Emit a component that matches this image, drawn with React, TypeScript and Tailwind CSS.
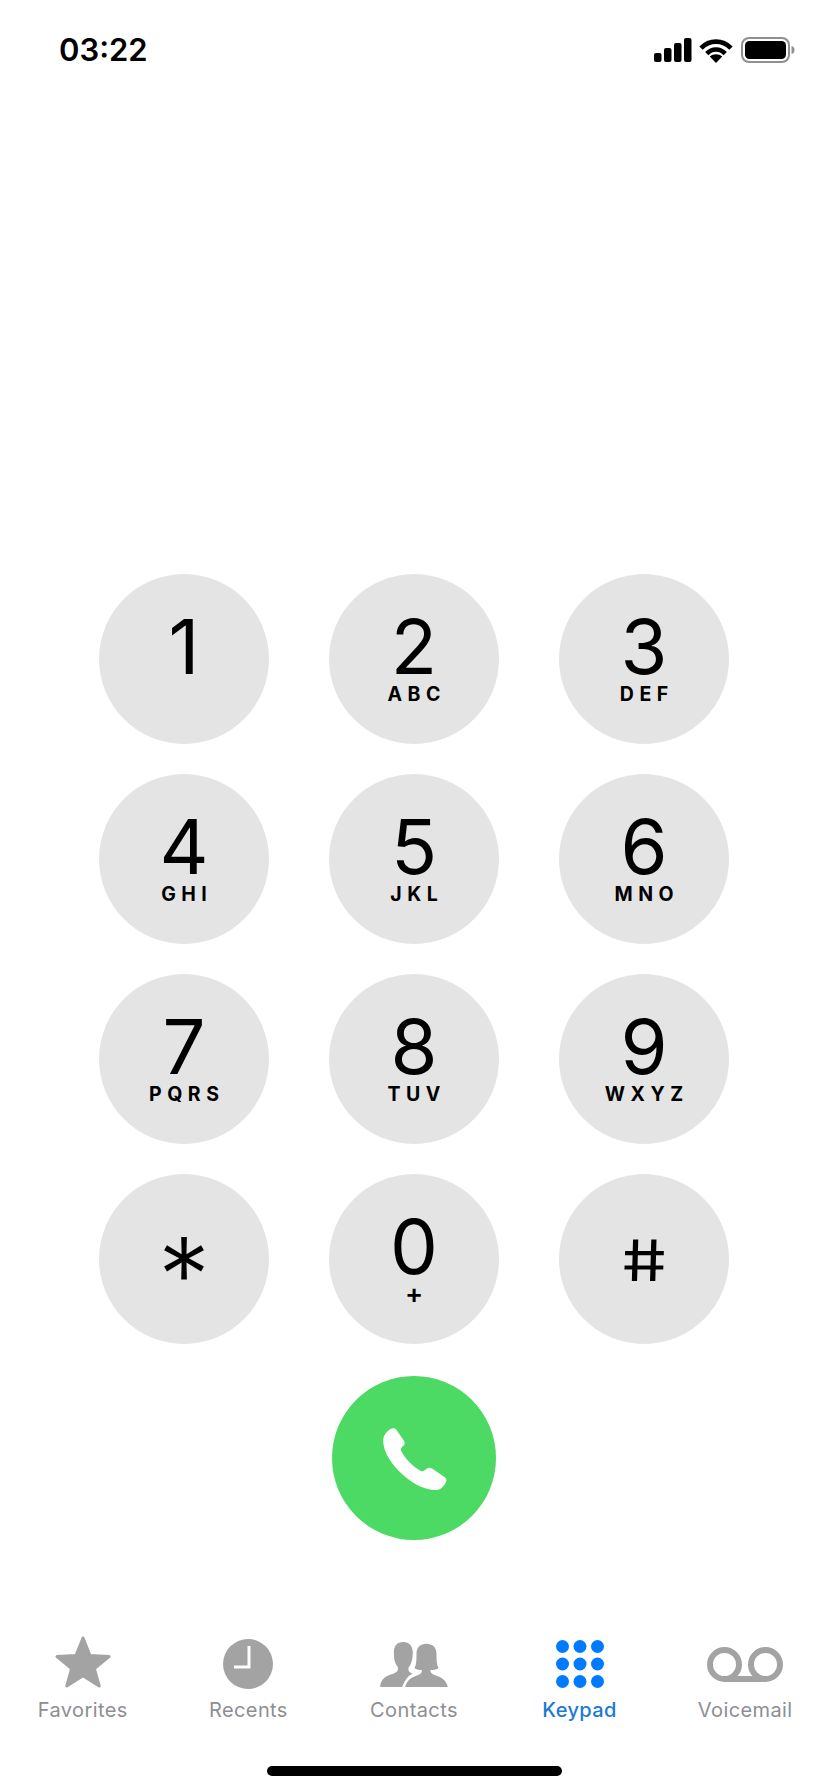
import type { ReactNode } from 'react';

const keys = [
  { digit: '1', letters: '' },
  { digit: '2', letters: 'ABC' },
  { digit: '3', letters: 'DEF' },
  { digit: '4', letters: 'GHI' },
  { digit: '5', letters: 'JKL' },
  { digit: '6', letters: 'MNO' },
  { digit: '7', letters: 'PQRS' },
  { digit: '8', letters: 'TUV' },
  { digit: '9', letters: 'WXYZ' },
];

function Key({ digit, letters }: { digit: string; letters: string }) {
  return (
    <button className="flex h-[170px] w-[170px] flex-col items-center rounded-full bg-[#e4e4e4] pt-[34px] text-black">
      <span className="h-[76px] text-[76px] leading-[76px] font-[370]">{digit}</span>
      {letters === '+' ? (
        <span className="h-[20px] text-[27px] leading-[20px] font-semibold">+</span>
      ) : (
        <span className="h-[20px] pl-[5.5px] text-[19.5px] leading-[20px] font-bold tracking-[5.5px]">{letters}</span>
      )}
    </button>
  );
}

function SymbolKey({ children }: { children: ReactNode }) {
  return (
    <button className="flex h-[170px] w-[170px] items-center justify-center rounded-full bg-[#e4e4e4] text-black">
      {children}
    </button>
  );
}

function StatusIcons() {
  return (
    <div className="flex items-center">
      <svg width="38" height="24" viewBox="0 0 38 24" fill="#000">
        <rect x="0" y="15" width="7.5" height="9" rx="2" />
        <rect x="10" y="10" width="7.5" height="14" rx="2" />
        <rect x="20" y="5" width="7.5" height="19" rx="2" />
        <rect x="30" y="0" width="7.5" height="24" rx="2" />
      </svg>
      <svg className="ml-[7px]" width="34" height="25" viewBox="0 0 34 25" fill="none" stroke="#000" strokeWidth="4.6">
        <path d="M2 10.2C10.4 1.4 23.6 1.4 32 10.2" />
        <path d="M7.8 15.6C13 10.2 21 10.2 26.2 15.6" />
        <path fill="#000" stroke="none" d="M17 25L10.8 18.6C14.4 15.4 19.6 15.4 23.2 18.6Z" />
      </svg>
      <svg className="ml-[8px]" width="54" height="26" viewBox="0 0 54 26" fill="none">
        <rect x="1" y="1" width="47" height="24" rx="7" stroke="#8f8f8f" strokeWidth="2" />
        <rect x="4" y="4" width="41" height="18" rx="4.5" fill="#000" />
        <path d="M50.5 9C52.5 9.6 53.5 11 53.5 13C53.5 15 52.5 16.4 50.5 17Z" fill="#8f8f8f" />
      </svg>
    </div>
  );
}

function PhoneIcon() {
  return (
    <svg className="mt-[2px] ml-[2px]" width="64" height="62" viewBox="0 0 190 185" fill="#fff">
      <path d="M14 9C24 0 34-2 40 6L62 38C66 44 64 50 59 54L54 60C52 62 52 65 54 69C64 90 88 116 112 128C117 130 120 129 123 127L129 122C134 118 140 117 146 121L184 147C190 152 190 160 185 166C178 176 170 185 158 185C118 185 75 158 44 125C16 96 0 64 0 38C0 26 6 16 14 9Z" />
    </svg>
  );
}

function StarIcon() {
  return (
    <svg className="mb-[5px]" width="56" height="52" viewBox="0 0 56 52" fill="#a3a3a3" stroke="#a3a3a3" strokeWidth="3" strokeLinejoin="round">
      <path d="M28 2L35 19.5L54 20.6L39.4 32.6L44.2 50L28 39.8L11.8 50L16.6 32.6L2 20.6L21 19.5Z" />
    </svg>
  );
}

function ClockIcon() {
  return (
    <svg width="50" height="50" viewBox="0 0 50 50">
      <circle cx="25" cy="25" r="25" fill="#a3a3a3" />
      <path d="M26 7V28H11" fill="none" stroke="#fff" strokeWidth="3" />
    </svg>
  );
}

function ContactsIcon() {
  return (
    <svg width="68" height="45" viewBox="27 33 203 135" fill="#a3a3a3">
      <path d="M27 168C28 150 36 140 50 134C62 130 76 126 80 118L80 108C72 98 68 85 68 65C68 45 78 33 96 33C114 33 125 45 125 65C125 85 120 100 112 110L112 118C114 123 118 126 124 128C108 136 100 150 93 168Z" />
      <path d="M102 168C106 152 116 142 132 136C142 132 152 128 152 120L152 116C146 118 138 116 130 112C136 100 136 85 136 68C136 48 148 38 165 38C184 38 196 48 196 68C196 85 196 100 202 112C194 116 186 118 178 116L178 120C178 128 190 132 200 136C216 142 226 152 230 168Z" />
    </svg>
  );
}

function KeypadIcon() {
  return (
    <svg width="48" height="48" viewBox="0 0 48 48" fill="#007aff">
      {[6.5, 24, 41.5].map((cy) =>
        [6.5, 24, 41.5].map((cx) => <circle key={`${cx}-${cy}`} cx={cx} cy={cy} r="6.5" />),
      )}
    </svg>
  );
}

function VoicemailIcon() {
  return (
    <svg width="76" height="35" viewBox="0 0 76 35" fill="none" stroke="#a3a3a3" strokeWidth="6">
      <circle cx="17.5" cy="17.5" r="14.5" />
      <circle cx="58.5" cy="17.5" r="14.5" />
      <path d="M17.5 32H58.5" />
    </svg>
  );
}

const tabs = [
  { label: 'Favorites', icon: <StarIcon /> },
  { label: 'Recents', icon: <ClockIcon /> },
  { label: 'Contacts', icon: <ContactsIcon /> },
  { label: 'Keypad', icon: <KeypadIcon />, active: true },
  { label: 'Voicemail', icon: <VoicemailIcon /> },
];

export default function App() {
  return (
    <div className="flex h-[1792px] w-[828px] flex-col overflow-hidden bg-white font-['Inter',sans-serif] text-black">
      {/* status bar */}
      <header className="flex h-[100px] items-start justify-between pt-[30px] pr-[33px] pl-[59px]">
        <span className="text-[31px] leading-[40px] font-semibold">03:22</span>
        <div className="pt-[7px]">
          <StatusIcons />
        </div>
      </header>

      {/* keypad */}
      <main className="mt-[474px] flex flex-col items-center">
        <div className="grid grid-cols-3 gap-x-[60px] gap-y-[30px]">
          {keys.map((k) => (
            <Key key={k.digit} digit={k.digit} letters={k.letters} />
          ))}
          <SymbolKey>
            <span className="pt-[32px] text-[104px] leading-[100px] font-[340]">*</span>
          </SymbolKey>
          <Key digit="0" letters="+" />
          <SymbolKey>
            <span className="inline-block scale-x-[1.25] skew-x-[8deg] pt-[4px] text-[57px] leading-[60px] font-normal">#</span>
          </SymbolKey>
        </div>
        <button className="mt-[32px] flex h-[164px] w-[164px] items-center justify-center rounded-full bg-[#4cd964]">
          <PhoneIcon />
        </button>
      </main>

      {/* tab bar */}
      <nav className="mt-[94px] grid grid-cols-5">
        {tabs.map((t) => (
          <div key={t.label} className="flex flex-col items-center">
            <div className="flex h-[60px] items-center justify-center">{t.icon}</div>
            <span className={`mt-[4px] text-[20px] leading-[24px] tracking-[0.4px] ${t.active ? 'font-medium text-[#1a78d6]' : 'text-[#8e8e93]'}`}>
              {t.label}
            </span>
          </div>
        ))}
      </nav>

      <div className="mx-auto mt-[44px] h-[10px] w-[295px] rounded-full bg-black" />
    </div>
  );
}
